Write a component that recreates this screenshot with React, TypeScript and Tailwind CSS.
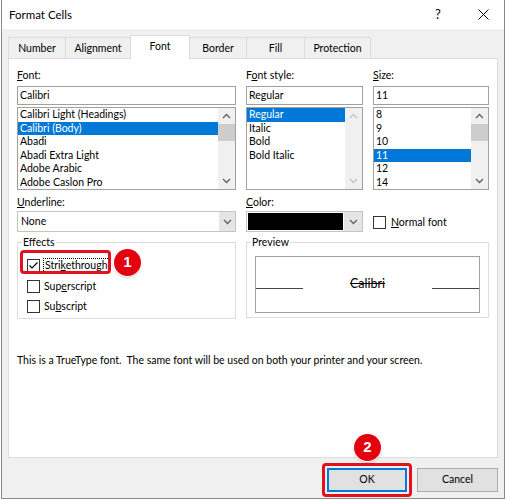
import clsx from 'clsx'

function Chevron({ up = false, color = '#606060' }: { up?: boolean; color?: string }) {
  return (
    <svg width="9" height="6" viewBox="0 0 9 6" fill="none">
      <path
        d={up ? 'M1 5 L4.5 1.5 L8 5' : 'M1 1 L4.5 4.5 L8 1'}
        stroke={color}
        strokeWidth="1.3"
      />
    </svg>
  )
}

function Scrollbar({ disabled = false, thumb = true }: { disabled?: boolean; thumb?: boolean }) {
  const c = disabled ? '#c4c4c4' : '#606060'
  return (
    <div className="flex w-[17px] flex-col bg-[#f0f0f0]">
      <div className="flex h-[16px] items-center justify-center">
        <Chevron up color={c} />
      </div>
      {thumb && <div className="h-[17px] bg-[#cdcdcd]" />}
      <div className="flex-1" />
      <div className="flex h-[16px] items-center justify-center">
        <Chevron color={c} />
      </div>
    </div>
  )
}

function ListBox({
  items,
  selected,
  disabled = false,
  thumb = true,
}: {
  items: string[]
  selected: number
  disabled?: boolean
  thumb?: boolean
}) {
  return (
    <div className="mt-[2px] flex h-[83px] border border-[#a0a0a0] bg-white">
      <div className="flex-1 overflow-hidden">
        {items.map((t, i) => (
          <div
            key={t}
            className={clsx(
              'h-[13.5px] whitespace-nowrap pl-[2px] leading-[13.5px]',
              i === selected && 'bg-[#0078d7] text-white'
            )}
          >
            {t}
          </div>
        ))}
      </div>
      <Scrollbar disabled={disabled} thumb={thumb} />
    </div>
  )
}

function Label({ children }: { children: React.ReactNode }) {
  return <div className="h-[16px] leading-[17px]">{children}</div>
}

function TextBox({ value }: { value: string }) {
  return (
    <div className="mt-[3px] h-[19px] border border-[#a0a0a0] bg-white pl-[2px] leading-[17px]">
      {value}
    </div>
  )
}

function CheckBox({ checked = false }: { checked?: boolean }) {
  return (
    <div className="flex h-[13px] w-[13px] items-center justify-center border border-[#333] bg-white">
      {checked && (
        <svg width="11" height="11" viewBox="0 0 11 11" fill="none">
          <path d="M1.5 5.5 L4 8 L9.5 2.5" stroke="#000" strokeWidth="1.2" />
        </svg>
      )}
    </div>
  )
}

function Badge({ n, className }: { n: string; className: string }) {
  return (
    <div
      className={clsx(
        'absolute flex h-[27px] w-[27px] items-center justify-center rounded-full bg-[#e3000f] font-["Liberation_Sans",sans-serif] text-[15px] font-bold text-white shadow-[0_0_0_1px_rgba(255,255,255,0.9),0_1px_3px_rgba(0,0,0,0.35)]',
        className
      )}
    >
      {n}
    </div>
  )
}

const tabs = [
  { name: 'Number', w: 'w-[58px]' },
  { name: 'Alignment', w: 'w-[65px]' },
  { name: 'Font', w: 'w-[60px]' },
  { name: 'Border', w: 'w-[57px]' },
  { name: 'Fill', w: 'w-[58px]' },
  { name: 'Protection', w: 'w-[66px]' },
]

export default function App() {
  return (
    <div className="relative h-[500px] w-[506px] overflow-hidden bg-white font-['Lato',sans-serif] text-[10.5px] text-black">
      <div className="ml-[1px] flex h-[499px] w-[504px] flex-col border-x border-b border-[#8a8a8a] bg-[#f0f0f0]">
        {/* title bar */}
        <div className="flex h-[29px] items-center bg-white pl-[7px] text-[11.5px]">
          <span className="flex-1">Format Cells</span>
          <span className="w-[20px] text-center text-[13px]">?</span>
          <div className="ml-[25px] mr-[11px] flex w-[20px] justify-center">
            <svg width="11" height="11" viewBox="0 0 11 11">
              <path d="M0.5 0.5 L10.5 10.5 M10.5 0.5 L0.5 10.5" stroke="#000" strokeWidth="1" />
            </svg>
          </div>
        </div>

        <div className="flex flex-1 flex-col px-[6px] pt-[6px]">
          {/* tabs */}
          <div className="flex h-[23px] items-end">
            {tabs.map((t, i) => (
              <div
                key={t.name}
                className={clsx(
                  'flex items-center justify-center border-t border-r border-[#dcdcdc] pt-[1px]',
                  t.w,
                  i === 0 && 'border-l',
                  t.name === 'Font'
                    ? 'relative z-10 -mb-px -ml-px h-[24px] border-l bg-white pb-[2px]'
                    : 'h-[21px] bg-[#f0f0f0]'
                )}
              >
                {t.name}
              </div>
            ))}
          </div>

          {/* panel */}
          <div className="flex h-[400px] flex-col border border-[#dcdcdc] bg-white px-[8px] pt-[8px]">
            <div className="flex gap-[10px]">
              <div className="w-[219px]">
                <Label>
                  <u>F</u>ont:
                </Label>
                <TextBox value="Calibri" />
                <ListBox
                  items={[
                    'Calibri Light (Headings)',
                    'Calibri (Body)',
                    'Abadi',
                    'Abadi Extra Light',
                    'Adobe Arabic',
                    'Adobe Caslon Pro',
                  ]}
                  selected={1}
                />
              </div>
              <div className="w-[117px]">
                <Label>
                  F<u>o</u>nt style:
                </Label>
                <TextBox value="Regular" />
                <ListBox
                  items={['Regular', 'Italic', 'Bold', 'Bold Italic']}
                  selected={0}
                  disabled
                  thumb={false}
                />
              </div>
              <div className="w-[116px]">
                <Label>
                  <u>S</u>ize:
                </Label>
                <TextBox value="11" />
                <ListBox items={['8', '9', '10', '11', '12', '14']} selected={3} />
              </div>
            </div>

            <div className="mt-[4px] flex gap-[10px]">
              <div className="w-[219px]">
                <Label>
                  <u>U</u>nderline:
                </Label>
                <div className="mt-[1px] flex h-[21px] border border-[#c4c4c4] bg-white">
                  <div className="flex-1 pl-[3px] leading-[19px]">None</div>
                  <div className="flex w-[16px] items-center justify-center bg-[#e5e5e5]">
                    <Chevron />
                  </div>
                </div>
              </div>
              <div className="w-[117px]">
                <Label>
                  <u>C</u>olor:
                </Label>
                <div className="mt-[1px] flex h-[21px] border border-[#c4c4c4] bg-white">
                  <div className="flex-1 p-[1px]">
                    <div className="h-full bg-black" />
                  </div>
                  <div className="flex w-[18px] items-center justify-center bg-[#e5e5e5]">
                    <Chevron />
                  </div>
                </div>
              </div>
              <div className="flex w-[116px] items-end pb-[3px]">
                <div className="flex items-center gap-[5px]">
                  <CheckBox />
                  <span className="leading-[13px]">
                    <u>N</u>ormal font
                  </span>
                </div>
              </div>
            </div>

            <div className="mt-[2px] flex gap-[10px]">
              <fieldset className="h-[85px] w-[219px] border border-[#dcdcdc] pl-[4px]">
                <legend className="px-[1px] leading-[16px]">Effects</legend>
                <div className="ml-[5px] mt-[8px] flex flex-col gap-[7px]">
                  <div className="flex items-center gap-[3px]">
                    <CheckBox checked />
                    <span className="border border-dotted border-black px-[1px] leading-[13px]">
                      Stri<u>k</u>ethrough
                    </span>
                  </div>
                  <div className="flex items-center gap-[4px]">
                    <CheckBox />
                    <span className="leading-[13px]">
                      Sup<u>e</u>rscript
                    </span>
                  </div>
                  <div className="flex items-center gap-[4px]">
                    <CheckBox />
                    <span className="leading-[13px]">
                      Su<u>b</u>script
                    </span>
                  </div>
                </div>
              </fieldset>
              <fieldset className="h-[84px] w-[243px] border border-[#dcdcdc] pl-[4px] pr-[8px]">
                <legend className="px-[1px] leading-[16px]">Preview</legend>
                <div className="ml-[4px] mt-[6px] flex h-[57px] items-center border border-[#a0a0a0]">
                  <div className="mt-[7px] h-px w-[47px] bg-[#444]" />
                  <div className="flex-1 text-center text-[12.5px] line-through">Calibri</div>
                  <div className="mt-[7px] h-px w-[47px] bg-[#444]" />
                </div>
              </fieldset>
            </div>

            <div className="mt-[33px] whitespace-pre leading-[16px]">
              This is a TrueType font.  The same font will be used on both your printer and your screen.
            </div>
          </div>

          {/* buttons */}
          <div className="mt-[10px] flex justify-end gap-[10px]">
            <div className="flex h-[24px] w-[80px] items-center justify-center border border-[#0078d7] bg-[#e1e1e1] shadow-[inset_0_0_0_1px_#0078d7]">
              OK
            </div>
            <div className="flex h-[24px] w-[81px] items-center justify-center border border-[#adadad] bg-[#e1e1e1]">
              Cancel
            </div>
          </div>
        </div>
      </div>

      {/* annotations */}
      <div className="absolute left-[20px] top-[250px] h-[24px] w-[91px] rounded-[4px] border-[3px] border-[#e3101e]" />
      <Badge n="1" className="left-[114px] top-[249px]" />
      <div className="absolute left-[322px] top-[463px] h-[34px] w-[90px] rounded-[4px] border-[3px] border-[#e3101e]" />
      <Badge n="2" className="left-[354px] top-[434px]" />
    </div>
  )
}
